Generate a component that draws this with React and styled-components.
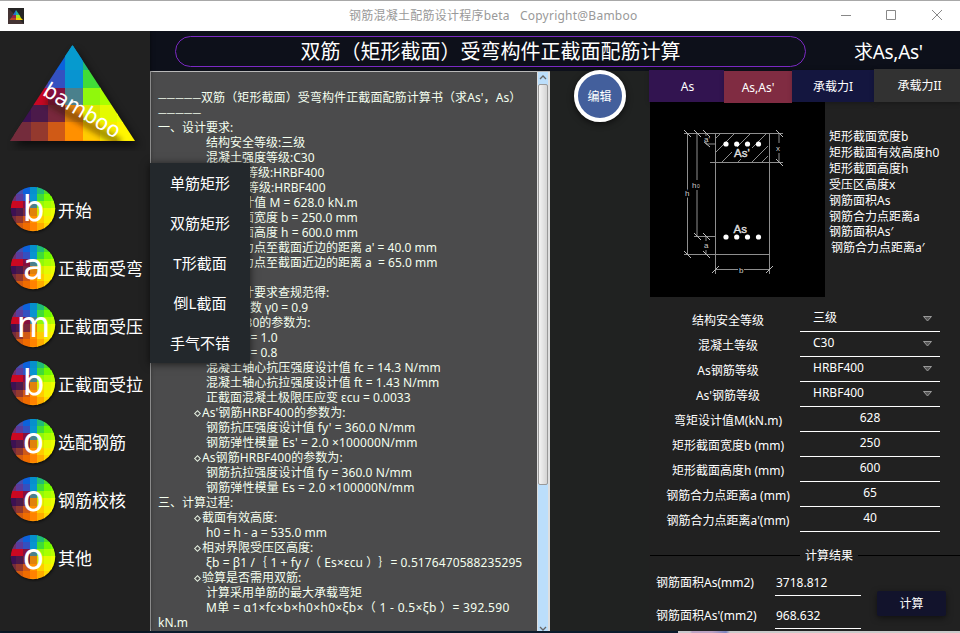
import React from "react";
import styled, { createGlobalStyle } from "styled-components";

const GlobalStyle = createGlobalStyle`
  * { box-sizing: border-box; }
  body {
    margin: 0;
    overflow: hidden;
    background: #212121;
    color: #fff;
    font: 12px/15px "Noto Sans", "Noto Sans CJK SC", sans-serif;
    text-spacing-trim: space-all;
  }
`;

const Window = styled.div`
  width: 960px;
  height: 633px;
  display: grid;
  grid-template-rows: 31px 600px 2px;
  overflow: hidden;
`;

const TitleBar = styled.header`
  position: relative;
  z-index: 3;
  display: grid;
  grid-template-columns: 349px 1fr 124px;
  align-items: center;
  border-top: 1px solid #a8a8a8;
  background: #fff;
  color: #999;
`;

const AppIcon = styled.svg`
  display: block;
  margin-left: 8px;
  margin-top: -1px;
`;

const WindowTitle = styled.div`
  white-space: pre;
  letter-spacing: 0.24px;
  margin-top: -1px;
`;

const WindowButtons = styled.svg`
  display: block;
`;

const Body = styled.div`
  display: grid;
  grid-template-columns: 150px 810px;
  min-height: 0;
`;

const Sidebar = styled.nav`
  position: relative;
  background: #212121;
  box-shadow: 0 0 4px rgba(0, 0, 0, 0.6);
`;

const Logo = styled.svg`
  display: block;
`;

const NavList = styled.div`
  display: flex;
  flex-direction: column;
  padding: 29px 0 0 8px;
`;

const NavItem = styled.div`
  display: flex;
  align-items: center;
  height: 58px;
  font-size: 17px;
  line-height: 24px;
  white-space: nowrap;
`;

const NavLabel = styled.span`
  padding-top: 4px;
`;

const Badge = styled.svg`
  flex: none;
  display: block;
`;

const SubMenu = styled.div`
  position: absolute;
  left: 150px;
  top: 132px;
  width: 100px;
  height: 200px;
  z-index: 2;
  background: #23282c;
  box-shadow: 0 1px 8px rgba(0, 0, 0, 0.65);
`;

const SubMenuItem = styled.div`
  height: 40px;
  font-size: 15px;
  line-height: 40px;
  text-align: center;
`;

const Main = styled.main`
  display: grid;
  grid-template-rows: 40px 560px;
  background: #212121;
`;

const Header = styled.div`
  display: grid;
  grid-template-columns: 25px 631px 1fr;
  align-items: center;
  background: #0d101a;
  font-size: 20px;
`;

const Heading = styled.h1`
  grid-column: 2;
  margin: 0;
  height: 31px;
  border: 1px solid #7b29c4;
  border-radius: 16px;
  font-size: 20px;
  font-weight: 400;
  line-height: 30px;
  text-align: center;
`;

const Mode = styled.div`
  padding-left: 48px;
  padding-top: 2px;
  font-size: 19px;
  letter-spacing: -0.3px;
`;

const Columns = styled.div`
  display: grid;
  grid-template-columns: 400px 99px 311px;
`;

const ReportFrame = styled.div`
  display: grid;
  grid-template-columns: 1fr 13px;
  height: 560px;
  border: 1px solid #b8b8b8;
  border-right-width: 0;
  border-bottom: 0;
  background: #4b4b4c;
  overflow: hidden;
`;

const ReportText = styled.div`
  padding: 3px 0 0 7px;
  color: #f4ffef;
  overflow: hidden;
`;

const Line = styled.div`
  height: 15px;
  line-height: 15px;
  white-space: pre;
  padding-left: ${(p) => [0, 36, 48][p.$level || 0]}px;
  letter-spacing: ${(p) => p.$spacing || 0}px;
`;

const Dashes = styled.span`
  font-size: 8.6px;
  letter-spacing: 0;
  vertical-align: 1px;
`;

const Diamond = styled.span`
  display: inline-block;
  width: 5px;
  height: 5px;
  margin: 0 2px 1px 1px;
  border: 1px solid #e4eedf;
  transform: rotate(45deg);
`;

const Scrollbar = styled.div`
  display: flex;
  flex-direction: column;
  justify-content: space-between;
  border: solid #dedede;
  border-width: 0 2px 0 1px;
  background: #bbdefb;
`;

const ScrollThumb = styled.div`
  height: 401px;
  margin-bottom: auto;
  border: 1px solid #999;
  border-radius: 2px;
  background: linear-gradient(90deg, #f4f4f4, #d4d4d4);
`;

const ScrollArrow = styled.svg`
  display: block;
  flex: none;
`;

const EditColumn = styled.div`
  display: flex;
  flex-direction: column;
  align-items: center;
  background: #202221;
`;

const EditButton = styled.button`
  width: 52px;
  height: 52px;
  margin-top: -1px;
  padding: 0;
  border: 4px solid #fff;
  border-radius: 50%;
  background: #435f9c;
  color: #fff;
  font: inherit;
  box-shadow: 0 2px 6px rgba(0, 0, 0, 0.6);
`;

const SidePanel = styled.section`
  display: grid;
  grid-template-rows: 31px 195px 250px 1fr;
`;

const Tabs = styled.div`
  display: grid;
  grid-template-columns: 75px 68px 82px 86px;
  grid-template-rows: 31px;
  align-items: end;
  z-index: 1;
`;

const Tab = styled.div`
  height: ${(p) => p.$height || 32}px;
  margin-bottom: ${(p) => (p.$active ? -1 : 0)}px;
  background: ${(p) => p.$color};
  line-height: 33px;
  text-align: center;
  padding-left: ${(p) => p.$inset || 0}px;
  box-shadow: 1px 1px 5px rgba(0, 0, 0, 0.3);
`;

const Figure = styled.div`
  display: grid;
  grid-template-columns: 175px 1fr;
  padding-left: 1px;
`;

const Drawing = styled.svg`
  display: block;
  background: #000;
`;

const Legend = styled.ul`
  margin: 0;
  padding: 27px 0 0 4px;
  list-style: none;
  line-height: 15.9px;
  white-space: nowrap;
`;

const LegendItem = styled.li`
  padding-left: ${(p) => p.$inset || 0}px;
`;

const Form = styled.div`
  padding-top: 8px;
`;

const FormRow = styled.div`
  display: grid;
  grid-template-columns: 151px 140px;
  height: 25px;
`;

const FormLabel = styled.label`
  padding: 8px 0 0 7px;
  text-align: center;
  white-space: nowrap;
`;

const Field = styled.div`
  display: flex;
  align-items: flex-start;
  justify-content: ${(p) => (p.$select ? "space-between" : "center")};
  height: 27px;
  padding: ${(p) => (p.$select ? "5px 8px 0 13px" : "5px 0 0")};
  border-bottom: 1px solid #fff;
`;

const Caret = styled.svg`
  margin-top: 6px;
`;

const Results = styled.div`
  display: grid;
  grid-template-rows: 16px 1fr;
`;

const Divider = styled.div`
  display: flex;
  align-items: center;
  gap: 5px;
  padding-left: 1px;
  &::before,
  &::after {
    content: "";
    height: 1px;
    background: #000;
  }
  &::before { width: 150px; }
  &::after { flex: 1; }
`;

const ResultBody = styled.div`
  display: grid;
  grid-template-columns: 212px 69px;
  column-gap: 16px;
`;

const ResultRow = styled.div`
  display: grid;
  grid-template-columns: 119px 86px;
  height: 33px;
  padding-left: 7px;
`;

const ResultLabel = styled.div`
  padding-top: 12px;
  white-space: nowrap;
`;

const ResultValue = styled.div`
  height: 33px;
  padding: 12px 0 0 1px;
  border-bottom: 1px solid #fff;
`;

const CalcButton = styled.button`
  height: 25px;
  margin: 28px 0 0;
  padding: 0;
  border: 0;
  border-radius: 2px;
  background: #12132c;
  color: #fff;
  font: inherit;
  box-shadow: 0 2px 6px rgba(0, 0, 0, 0.5);
`;

const Footer = styled.footer`
  display: grid;
  grid-template-columns: 678px 1fr;
  background: #0b1b2c;
  &::after {
    content: "";
    grid-column: 2;
    background: linear-gradient(90deg, #c9c9cd 12px, #bda3c4 14px 34px, #7d87c0 48px, #cacaca 52px);
  }
`;

const PALETTE = [
  ["#783070", "#4450b0", "#0c62dc", "#0690cc", "#20bc78", "#4cdc28", "#70f400"],
  ["#70306c", "#5a3c9c", "#3450c0", "#0894d0", "#40dc38", "#70fa00", "#84ff00"],
  ["#cc0820", "#c80824", "#84103e", "#4a808c", "#90f80c", "#a8ff00", "#b8ff00"],
  ["#3c1152", "#4b1a4a", "#78283c", "#e0820c", "#dce800", "#e4fa00", "#ecff00"],
  ["#742c3c", "#94392e", "#d05a16", "#ff9000", "#ffcc00", "#f8ee00", "#fff600"],
  ["#94392e", "#d45c10", "#f06c00", "#ff8200", "#ffac00", "#ffd800", "#ffee00"],
  ["#c05010", "#f06800", "#fa7800", "#ff9000", "#ffb400", "#ffd800", "#ffe000"],
];

const Mosaic = ({ x, y, cell }) => (
  <g shapeRendering="crispEdges">
    {PALETTE.map((row, r) =>
      row.map((fill, c) => (
        <rect key={`${r}-${c}`} x={x + c * cell} y={y + r * cell} width={cell + 0.5} height={cell + 0.5} fill={fill} />
      ))
    )}
  </g>
);

const BrandLogo = () => (
  <Logo width="150" height="120" viewBox="0 31 150 120">
    <defs>
      <clipPath id="tri"><path d="M72.500 45 135 141H10z" /></clipPath>
      <filter id="shade" x="-20%" y="-20%" width="150%" height="150%">
        <feGaussianBlur stdDeviation="4" />
      </filter>
      <filter id="glow" x="-20%" y="-50%" width="150%" height="200%">
        <feGaussianBlur stdDeviation="2.500" />
      </filter>
    </defs>
    <path d="M75 50 139 146H14z" fill="#000" opacity=".6" filter="url(#shade)" />
    <g clipPath="url(#tri)">
      <Mosaic x={13.5} y={53} cell={17.3} />
      <path d="M55 46H90V54H55z" fill="#069ace" />
      <path d="M0 122H31V142H0z" fill="#742c3c" />
      <path d="M31 122H48V142H31z" fill="#94392e" />
      <path d="M48 122H65V142H48z" fill="#d05a16" />
      <path d="M65.300 45H82.600V70H65.300z" fill="#069ace" />
      <path d="M46 105 120 148" transform="translate(0 -5)" stroke="#301800" strokeWidth="9" opacity=".4" filter="url(#glow)" />
    </g>
    <text x="41.500" y="94.500" transform="rotate(31 41.500 94.500)" fontFamily="DejaVu Sans" fontSize="21.500" textLength="86" lengthAdjust="spacingAndGlyphs" fill="#fff">bamboo</text>
  </Logo>
);

const LetterBadge = ({ letter, id }) => (
  <Badge width="50" height="50" viewBox="0 0 50 50">
    <defs>
      <clipPath id={id}><circle cx="25" cy="25" r="22.200" /></clipPath>
      <filter id={`${id}-s`}><feGaussianBlur stdDeviation="1.500" /></filter>
    </defs>
    <circle cx="26" cy="26.500" r="21.500" fill="#000" opacity=".8" filter={`url(#${id}-s)`} />
    <g clipPath={`url(#${id})`}><Mosaic x={0.5} y={3} cell={7.15} /></g>
    <text x="25.500" y="37" textAnchor="middle" fontFamily="DejaVu Sans" fontSize="35" fill="#fff">{letter}</text>
  </Badge>
);

const NAV = [
  ["b", "开始"],
  ["a", "正截面受弯"],
  ["m", "正截面受压"],
  ["b", "正截面受拉"],
  ["o", "选配钢筋"],
  ["o", "钢筋校核"],
  ["o", "其他"],
];

const SUBMENU = ["单筋矩形", "双筋矩形", "T形截面", "倒L截面", "手气不错"];

const REPORT = [
  { text: "" },
  { dashes: true, text: "双筋（矩形截面）受弯构件正截面配筋计算书（求As'，As）", spacing: 0.1 },
  { dashes: true, text: "" },
  { text: "一、设计要求:" },
  { level: 2, text: "结构安全等级:三级" },
  { level: 2, text: "混凝土强度等级:C30" },
  { level: 2, text: "As'钢筋等级:HRBF400" },
  { level: 2, text: "As 钢筋等级:HRBF400", spacing: 0.06 },
  { level: 2, text: "弯矩设计值 M = 628.0 kN.m", spacing: 0.05 },
  { level: 2, text: "矩形截面宽度 b = 250.0 mm" },
  { level: 2, text: "矩形截面高度 h = 600.0 mm" },
  { level: 2, text: "钢筋合力点至截面近边的距离 a' = 40.0 mm" },
  { level: 2, text: "钢筋合力点至截面近边的距离 a  = 65.0 mm" },
  { text: "" },
  { text: "二、根据以上设计要求查规范得:" },
  { level: 1, item: true, text: "重要性系数 γ0 = 0.9" },
  { level: 1, item: true, text: "混凝土C30的参数为:" },
  { level: 2, text: "系数 α1 = 1.0" },
  { level: 2, text: "系数 β1 = 0.8" },
  { level: 2, text: "混凝土轴心抗压强度设计值 fc = 14.3 N/mm", spacing: 0.06 },
  { level: 2, text: "混凝土轴心抗拉强度设计值 ft = 1.43 N/mm", spacing: 0.06 },
  { level: 2, text: "正截面混凝土极限压应变 εcu = 0.0033" },
  { level: 1, item: true, text: "As'钢筋HRBF400的参数为:", spacing: 0.07 },
  { level: 2, text: "钢筋抗压强度设计值 fy' = 360.0 N/mm", spacing: 0.07 },
  { level: 2, text: "钢筋弹性模量 Es' = 2.0 ×100000N/mm", spacing: 0.15 },
  { level: 1, item: true, text: "As钢筋HRBF400的参数为:", spacing: 0.07 },
  { level: 2, text: "钢筋抗拉强度设计值 fy = 360.0 N/mm", spacing: 0.07 },
  { level: 2, text: "钢筋弹性模量 Es = 2.0 ×100000N/mm", spacing: 0.14 },
  { text: "三、计算过程:" },
  { level: 1, item: true, text: "截面有效高度:" },
  { level: 2, text: "h0 = h - a = 535.0 mm" },
  { level: 1, item: true, text: "相对界限受压区高度:" },
  { level: 2, text: "ξb = β1 /｛ 1 + fy /（ Es×εcu ）｝= 0.5176470588235295", spacing: 0.1 },
  { level: 1, item: true, text: "验算是否需用双筋:" },
  { level: 2, text: "计算采用单筋的最大承载弯矩" },
  { level: 2, text: "M单 = α1×fc×b×h0×h0×ξb×（ 1 - 0.5×ξb ）= 392.590", spacing: 0.32 },
  { text: "kN.m" },
];

const LEGEND = ["矩形截面宽度b", "矩形截面有效高度h0", "矩形截面高度h", "受压区高度x", "钢筋面积As", "钢筋合力点距离a", "钢筋面积As′", "钢筋合力点距离a′"];

const FIELDS = [
  ["结构安全等级", "三级", true],
  ["混凝土等级", "C30", true],
  ["As钢筋等级", "HRBF400", true],
  ["As'钢筋等级", "HRBF400", true],
  ["弯矩设计值M(kN.m)", "628"],
  ["矩形截面宽度b (mm)", "250"],
  ["矩形截面高度h (mm)", "600"],
  ["钢筋合力点距离a (mm)", "65"],
  ["钢筋合力点距离a'(mm)", "40"],
];

const SectionDrawing = () => (
  <Drawing width="175" height="195" viewBox="0 2 175 195">
    <defs>
      <clipPath id="zone"><path d="M66 34H118V62H66z" /></clipPath>
    </defs>
    <g fill="none" stroke="#8e8e8e" strokeWidth="1">
      <path d="M34 33.500H133M60 62.500H133M65.500 33V174M119.500 33V174M34 154.500H119M44 136.500H65M65 169.500H120" />
      <path d="M37.500 33V155M47 33V137M56 33V44H65M129 33V62M56 137V155" />
      <g clipPath="url(#zone)">
        <path d="M58 46 78 26M60 58 92 26M68 66 108 26M84 66 124 26M98 66 124 40M108 66 124 50" />
      </g>
      <path d="M34 30 41 37M44 30 51 37M53 30 60 37M126 30 133 37M126 59 133 66M34 151 41 158M44 133 51 140M53 133 60 140M53 151 60 158M53 41 60 47M62 173 69 166M116 173 123 166" stroke="#bbb" />
    </g>
    <g fill="#000">
      <path d="M82 47H102V59H82zM34 56H41V65H34zM42 80H51V90H42zM126 43H132V53H126zM88 165H94V174H88zM53 36H59V42H53zM53 141H59V150H53z" />
      <path d="M34 56H37V65H34z" />
    </g>
    <path d="M37.500 55V66" stroke="#8e8e8e" />
    <g fill="#fff">
      {[76, 86.7, 97.5, 108.5].map((cx) => (
        <React.Fragment key={cx}>
          <circle cx={cx} cy="44" r="2.600" />
          <circle cx={cx} cy="137" r="2.600" />
        </React.Fragment>
      ))}
    </g>
    <g fill="#ddd" stroke="#ddd" strokeWidth=".4" fontFamily="Liberation Sans" fontSize="11.500">
      <text x="84" y="57">As'</text>
      <text x="83.500" y="132.500">As</text>
    </g>
    <g fill="#ccc" fontFamily="Liberation Sans" fontSize="8">
      <text x="35" y="96" stroke="#000" strokeWidth="3" paintOrder="stroke">h</text>
      <text x="42" y="88" stroke="#000" strokeWidth="3" paintOrder="stroke">h</text>
      <text x="47" y="88" fontSize="5">0</text>
      <text x="54" y="42">a'</text>
      <text x="54" y="148">a</text>
      <text x="126" y="51">x</text>
      <text x="89" y="173">b</text>
    </g>
  </Drawing>
);

export default function App() {
  return (
    <Window>
      <GlobalStyle />
      <TitleBar>
        <AppIcon width="16" height="16" viewBox="0 0 16 16">
          <path d="M0 0H16V16H0z" fill="#252424" />
          <path d="M0 0 16 16H0z" fill="#443434" />
          <path d="M8 2 5 7H8z" fill="#226ed0" />
          <path d="M8 2 11.500 7H8z" fill="#24b69e" />
          <path d="M5 7H8V10H3z" fill="#9a2448" />
          <path d="M8 7H11.500L13 10H8z" fill="#a8e820" />
          <path d="M3 10H8V12H1.500z" fill="#b84828" />
          <path d="M8 10H13L15 12H8z" fill="#f8d000" />
        </AppIcon>
        <WindowTitle>钢筋混凝土配筋设计程序beta   Copyright@Bamboo</WindowTitle>
        <WindowButtons width="124" height="30" viewBox="0 1 124 30" fill="none" stroke="#888">
          <path d="M5 15.500H15M50.500 10.500H59.500V19.500H50.500zM96 10 106 20M106 10 96 20" />
        </WindowButtons>
      </TitleBar>
      <Body>
        <Sidebar>
          <BrandLogo />
          <NavList>
            {NAV.map(([letter, label], i) => (
              <NavItem key={label}>
                <LetterBadge letter={letter} id={`badge${i}`} />
                <NavLabel>{label}</NavLabel>
              </NavItem>
            ))}
          </NavList>
          <SubMenu>
            {SUBMENU.map((label) => <SubMenuItem key={label}>{label}</SubMenuItem>)}
          </SubMenu>
        </Sidebar>
        <Main>
          <Header>
            <Heading>双筋（矩形截面）受弯构件正截面配筋计算</Heading>
            <Mode>求As,As'</Mode>
          </Header>
          <Columns>
            <ReportFrame>
              <ReportText>
                {REPORT.map((line, i) => (
                  <Line key={i} $level={line.level} $spacing={line.spacing}>
                    {line.dashes && <Dashes>—————</Dashes>}
                    {line.item && <Diamond />}
                    {line.text}
                  </Line>
                ))}
              </ReportText>
              <Scrollbar>
                <ScrollArrow width="10" height="12" viewBox="0 0 10 12">
                  <path d="M2 7 5 4 8 7" fill="none" stroke="#666" strokeWidth="1.300" />
                </ScrollArrow>
                <ScrollThumb />
                <ScrollArrow width="10" height="6" viewBox="0 0 10 6">
                  <path d="M2 2 5 5 8 2" fill="none" stroke="#666" strokeWidth="1.300" />
                </ScrollArrow>
              </Scrollbar>
            </ReportFrame>
            <EditColumn>
              <EditButton>编辑</EditButton>
            </EditColumn>
            <SidePanel>
              <Tabs>
                <Tab $color="#321450" $inset={2}>As</Tab>
                <Tab $color="#802c42" $active>As,As'</Tab>
                <Tab $color="#14163f">承载力I</Tab>
                <Tab $color="#323232" $height={33} $inset={5}>承载力II</Tab>
              </Tabs>
              <Figure>
                <SectionDrawing />
                <Legend>
                  {LEGEND.map((text, i) => (
                    <LegendItem key={text} $inset={i === LEGEND.length - 1 ? 2 : 0}>{text}</LegendItem>
                  ))}
                </Legend>
              </Figure>
              <Form>
                {FIELDS.map(([label, value, select]) => (
                  <FormRow key={label}>
                    <FormLabel>{label}</FormLabel>
                    <Field $select={select}>
                      {value}
                      {select && (
                        <Caret width="9" height="6" viewBox="0 0 9 6">
                          <path d="M.500 .500H8.500L4.500 5z" fill="#555" stroke="#999" />
                        </Caret>
                      )}
                    </Field>
                  </FormRow>
                ))}
              </Form>
              <Results>
                <Divider>计算结果</Divider>
                <ResultBody>
                  <div>
                    <ResultRow>
                      <ResultLabel>钢筋面积As(mm2)</ResultLabel>
                      <ResultValue>3718.812</ResultValue>
                    </ResultRow>
                    <ResultRow>
                      <ResultLabel>钢筋面积As'(mm2)</ResultLabel>
                      <ResultValue>968.632</ResultValue>
                    </ResultRow>
                  </div>
                  <CalcButton>计算</CalcButton>
                </ResultBody>
              </Results>
            </SidePanel>
          </Columns>
        </Main>
      </Body>
      <Footer />
    </Window>
  );
}
